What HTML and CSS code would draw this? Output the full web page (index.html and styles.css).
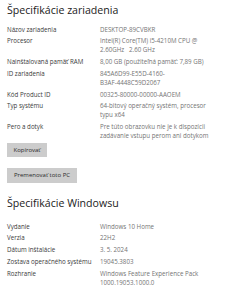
FILE: index.html
```html
<!DOCTYPE html>
<html lang="sk">
<head>
<meta charset="utf-8">
<link rel="stylesheet" href="styles.css">
</head>
<body>
<main class="page">
  <h1 class="title">Špecifikácie zariadenia</h1>
  <dl class="specs">
    <dt>Názov zariadenia</dt><dd>DESKTOP-89CVBKR</dd>
    <dt>Procesor</dt><dd>Intel(R) Core(TM) i5-4210M CPU @<br>2.60GHz&nbsp;&nbsp; 2.60 GHz</dd>
    <dt>Nainštalovaná pamäť RAM</dt><dd>8,00 GB (použiteľná pamäť: 7,89 GB)</dd>
    <dt>ID zariadenia</dt><dd>845A6D99-E55D-4160-<br>B3AF-4448C59D2067</dd>
    <dt>Kód Product ID</dt><dd>00325-80000-00000-AAOEM</dd>
    <dt>Typ systému</dt><dd>64-bitový operačný systém, procesor<br>typu x64</dd>
    <dt>Pero a dotyk</dt><dd>Pre túto obrazovku nie je k dispozícii<br>zadávanie vstupu perom ani dotykom</dd>
  </dl>
  <div class="actions">
    <button class="btn btn-copy">Kopírovať</button>
    <button class="btn btn-rename">Premenovať toto PC</button>
  </div>
  <h1 class="title title-win">Špecifikácie Windowsu</h1>
  <dl class="specs specs-win">
    <dt>Vydanie</dt><dd>Windows 10 Home</dd>
    <dt>Verzia</dt><dd>22H2</dd>
    <dt>Dátum inštalácie</dt><dd>3. 5. 2024</dd>
    <dt>Zostava operačného systému</dt><dd>19045.3803</dd>
    <dt>Rozhranie</dt><dd>Windows Feature Experience Pack<br>1000.19053.1000.0</dd>
  </dl>
</main>
</body>
</html>
```
FILE: styles.css
```css
html, body {
  margin: 0;
  padding: 0;
  background: #ffffff;
}
.page {
  padding: 2px 0 0 7px;
  font-family: "Open Sans", "Noto Sans", sans-serif;
  color: #2b2b2b;
}
.title {
  margin: 0;
  font-size: 10.6px;
  line-height: 16px;
  font-weight: 400;
  color: #1b1b1b;
}
.specs {
  display: grid;
  grid-template-columns: 93px 1fr;
  row-gap: 2.75px;
  margin: 6.5px 0 0 0;
  font-size: 6.2px;
  line-height: 9px;
}
.specs dt {
  color: #3a3a3a;
}
.specs dd {
  margin: 0;
  color: #747474;
}
.actions {
  display: flex;
  flex-direction: column;
  align-items: flex-start;
  gap: 11px;
  margin-top: 2.5px;
}
.btn {
  border: 0;
  margin: 0;
  padding: 0;
  height: 14.5px;
  background: #cccccc;
  color: #2b2b2b;
  font-family: "Open Sans", "Noto Sans", sans-serif;
  font-size: 6px;
  line-height: 14.5px;
  text-align: center;
}
.btn-copy { width: 40px; }
.btn-rename { width: 70px; }
.title-win {
  margin-top: 12px;
}
.specs-win {
  margin-top: 11px;
}
```
